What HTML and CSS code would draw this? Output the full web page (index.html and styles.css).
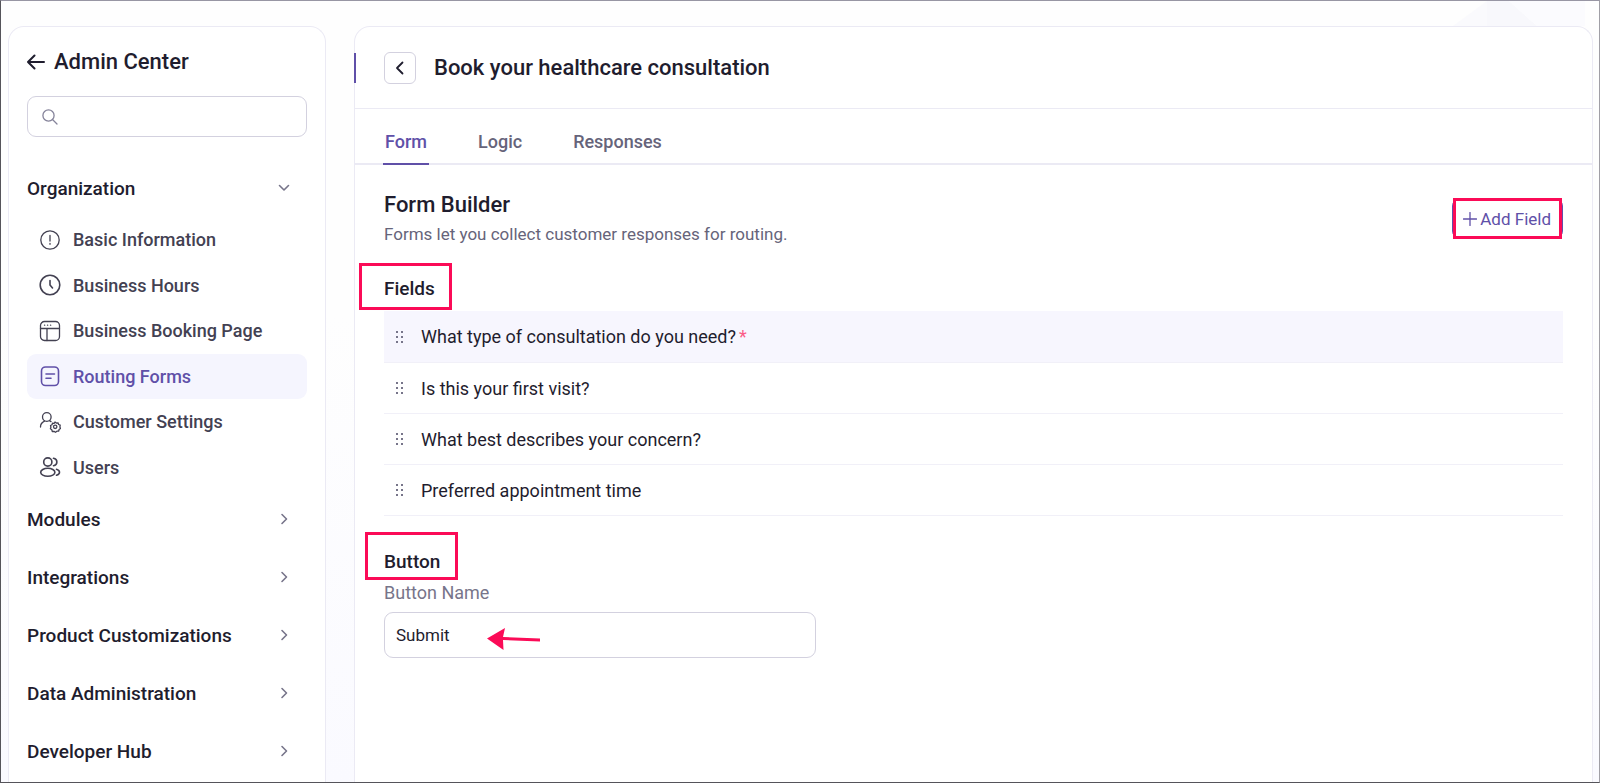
FILE: index.html
```
<!DOCTYPE html>
<html lang="en">
  <head>
    <meta charset="utf-8">
    <title>Admin Center - Routing Forms</title>
    <link rel="stylesheet" href="styles.css">
  </head>
  <body>
    <svg class="backdrop" viewBox="0 0 140 25" aria-hidden="true">
      <path d="M0 25L34 0v25z" fill="#fafafd"/>
      <path d="M34 0h22l28 25H34z" fill="#f8f8fc"/>
      <path d="M56 0h76v25H84z" fill="#fbfbfe"/>
    </svg>
    <aside class="sidebar">
      <a class="sidebar-title" href="#">
        <svg width="18" height="16" viewBox="0 0 18 16"><path d="M17 8H1M7.500 1.500L1 8l6.500 6.500"/></svg>
        Admin Center
      </a>
      <div class="search">
        <svg width="16" height="16" viewBox="0 0 16 16"><circle cx="6.5" cy="6.5" r="5.6"/><path d="M10.5 10.5L15 15"/></svg>
        <input type="search" aria-label="Search">
      </div>
      <nav>
        <button class="group">Organization
          <svg width="12" height="12" viewBox="0 0 12 12"><path d="M1.500 3.500L6 8l4.500-4.500"/></svg>
        </button>
        <div class="items">
          <a href="#">
            <svg width="22" height="22" viewBox="0 0 22 22"><circle cx="11" cy="11" r="9.200"/><path d="M11 6.500v5.500M11 14.300v1"/></svg>
            Basic Information
          </a>
          <a href="#">
            <svg class="bold" width="22" height="22" viewBox="0 0 22 22"><circle cx="11" cy="11" r="9.800"/><path d="M11 6.500v4.500l2.500 3"/></svg>
            Business Hours
          </a>
          <a href="#">
            <svg width="22" height="22" viewBox="0 0 22 22"><rect x="1.500" y="1.500" width="19" height="19" rx="4"/><path d="M1.500 8.500h19M8 8.500v12"/><path d="M5.500 5.200h.2M8.500 5.200h.2M11.500 5.200h.2"/></svg>
            Business Booking Page
          </a>
          <a href="#" class="active">
            <svg class="bold" width="22" height="22" viewBox="0 0 22 22"><rect x="2.500" y="2" width="17" height="18.500" rx="4"/><path d="M7 9h8.500M7 13.200h5"/></svg>
            Routing Forms
          </a>
          <a href="#">
            <svg width="22" height="22" viewBox="0 0 22 22"><circle cx="7.800" cy="6" r="4.300"/><path d="M1.500 16c0-3 1.800-4.800 4-5.800M10.500 9.600l1.500 1"/><path d="M16 11l1.300 1.100 1.700-.3.600 1.700 1.600.7-.3 1.700.6 1.600-1.400 1-.5 1.700-1.700 0-1.400 1.100-1.500-.9-1.700.1-.5-1.700-1.400-1 .5-1.600-.4-1.700 1.500-.8.6-1.600 1.700.2z"/><circle cx="16.200" cy="15.800" r="1.700"/></svg>
            Customer Settings
          </a>
          <a href="#">
            <svg class="bold" width="22" height="22" viewBox="0 0 22 22"><circle cx="8.800" cy="6" r="4.100"/><ellipse cx="8.800" cy="16.300" rx="7.100" ry="4"/><path d="M14.500 2.300c4.500.8 4.500 6.600 0 7.400M17.500 13.200c4 1.200 4 4.800 0 6"/></svg>
            Users
          </a>
        </div>
        <button class="group">Modules
          <svg width="12" height="12" viewBox="0 0 12 12"><path d="M4 1.500L8.500 6 4 10.500"/></svg>
        </button>
        <button class="group">Integrations
          <svg width="12" height="12" viewBox="0 0 12 12"><path d="M4 1.500L8.500 6 4 10.500"/></svg>
        </button>
        <button class="group">Product Customizations
          <svg width="12" height="12" viewBox="0 0 12 12"><path d="M4 1.500L8.500 6 4 10.500"/></svg>
        </button>
        <button class="group">Data Administration
          <svg width="12" height="12" viewBox="0 0 12 12"><path d="M4 1.500L8.500 6 4 10.500"/></svg>
        </button>
        <button class="group">Developer Hub
          <svg width="12" height="12" viewBox="0 0 12 12"><path d="M4 1.500L8.500 6 4 10.500"/></svg>
        </button>
      </nav>
    </aside>

    <main class="panel">
      <header class="panel-header">
        <button class="back" aria-label="Back">
          <svg width="14" height="14" viewBox="0 0 14 14"><path d="M9.500 1.500L4 7l5.500 5.500"/></svg>
        </button>
        <h1>Book your healthcare consultation</h1>
      </header>
      <div class="tabs">
        <a href="#" class="active">Form</a>
        <a href="#">Logic</a>
        <a href="#">Responses</a>
      </div>
      <div class="content">
        <div class="builder-head">
          <div>
            <h2>Form Builder</h2>
            <p>Forms let you collect customer responses for routing.</p>
          </div>
          <button class="add-field">
            <svg width="14" height="14" viewBox="0 0 14 14"><path d="M7 .500v13M.500 7h13"/></svg>
            Add Field
            <span class="mark mark-add"></span>
          </button>
        </div>

        <h3>Fields<span class="mark mark-fields"></span></h3>
        <ul class="fields">
          <li class="selected">
            <svg width="8" height="12" viewBox="0 0 8 12"><path d="M0 0h2v2H0zM5 0h2v2H5zM0 5h2v2H0zM5 5h2v2H5zM0 10h2v2H0zM5 10h2v2H5z"/></svg>
            <span>What type of consultation do you need?</span><span class="required">*</span>
          </li>
          <li>
            <svg width="8" height="12" viewBox="0 0 8 12"><path d="M0 0h2v2H0zM5 0h2v2H5zM0 5h2v2H0zM5 5h2v2H5zM0 10h2v2H0zM5 10h2v2H5z"/></svg>
            <span>Is this your first visit?</span>
          </li>
          <li>
            <svg width="8" height="12" viewBox="0 0 8 12"><path d="M0 0h2v2H0zM5 0h2v2H5zM0 5h2v2H0zM5 5h2v2H5zM0 10h2v2H0zM5 10h2v2H5z"/></svg>
            <span>What best describes your concern?</span>
          </li>
          <li>
            <svg width="8" height="12" viewBox="0 0 8 12"><path d="M0 0h2v2H0zM5 0h2v2H5zM0 5h2v2H0zM5 5h2v2H5zM0 10h2v2H0zM5 10h2v2H5z"/></svg>
            <span>Preferred appointment time</span>
          </li>
        </ul>

        <h3>Button<span class="mark mark-button"></span></h3>
        <label for="button-name">Button Name</label>
        <div class="name-box">
          <input type="text" id="button-name" value="Submit">
          <svg class="arrow" width="54" height="24" viewBox="0 0 54 24"><path d="M0 11.500L18 1l-2 9 37 1.500v3L16 13l.500 10z"/></svg>
        </div>
      </div>
    </main>
  </body>
</html>
```
FILE: styles.css
```
* {
  box-sizing: border-box;
}
body {
  position: relative;
  display: flex;
  gap: 28px;
  min-height: 100vh;
  margin: 0;
  padding: 25px 6px 0 7px;
  border: 1px solid #55545a;
  border-top-color: #9896a4;
  border-right-color: #a09fa6;
  background: linear-gradient(#fefefe 40%, #fafaff);
  color: #1f1d2e;
  font-family: Roboto, "Liberation Sans", sans-serif;
  font-size: 18px;
}
button,
input {
  font: inherit;
  color: inherit;
}
button {
  cursor: pointer;
}
a {
  color: inherit;
  text-decoration: none;
}
h1,
h2,
h3,
p,
ul {
  margin: 0;
  padding: 0;
}
svg {
  flex: none;
  fill: none;
  stroke: currentColor;
  stroke-width: 1.3;
  stroke-linecap: round;
  stroke-linejoin: round;
}
svg.bold {
  stroke-width: 1.6;
}
.backdrop {
  position: absolute;
  top: 0;
  right: 6px;
  width: 140px;
  height: 25px;
  stroke: none;
}

/* sidebar */
.sidebar {
  flex: none;
  width: 318px;
  padding: 0 18px;
  border: 1px solid #ebeaf4;
  border-bottom: none;
  border-radius: 16px 16px 0 0;
  background: #fff;
}
.sidebar-title {
  display: flex;
  align-items: center;
  gap: 9px;
  height: 69px;
  font-size: 22px;
  font-weight: 500;
}
.sidebar-title svg {
  stroke-width: 2;
}
.search {
  display: flex;
  align-items: center;
  height: 41px;
  margin-bottom: 22px;
  padding: 0 14px;
  border: 1px solid #d3d1df;
  border-radius: 9px;
  color: #85839a;
}
.search input {
  flex: 1;
  min-width: 0;
  border: none;
  outline: none;
  background: none;
}
.group {
  display: flex;
  align-items: center;
  justify-content: space-between;
  width: 100%;
  height: 58px;
  padding: 0 17px 0 0;
  border: none;
  background: none;
  font-size: 19px;
  font-weight: 500;
  text-align: left;
}
.group svg {
  color: #77758a;
  stroke-width: 1.6;
}
.items {
  display: grid;
  grid-auto-rows: 1fr;
  height: 273px;
}
.items a {
  display: flex;
  align-items: center;
  gap: 12px;
  padding-left: 12px;
  border-radius: 9px;
  color: #434152;
  font-weight: 500;
}
.items a.active {
  background: #f5f5fe;
  color: #6050a8;
}

/* main panel */
.panel {
  flex: 1;
  min-width: 0;
  border: 1px solid #ebeaf4;
  border-bottom: none;
  border-radius: 16px 16px 0 0;
  background: #fff;
}
.panel-header {
  position: relative;
  display: flex;
  align-items: center;
  gap: 18px;
  height: 82px;
  padding-left: 29px;
  border-bottom: 1px solid #ebeaf4;
}
.panel-header::before {
  content: "";
  position: absolute;
  top: 26px;
  left: -1px;
  width: 2px;
  height: 30px;
  background: #6050a8;
}
.back {
  display: grid;
  place-items: center;
  width: 32px;
  height: 32px;
  padding: 0;
  border: 1px solid #d3d1df;
  border-radius: 6px;
  background: #fff;
}
.back svg {
  stroke-width: 1.8;
}
h1,
h2 {
  font-size: 22px;
  font-weight: 500;
  line-height: 26px;
}
.tabs {
  display: flex;
  gap: 47px;
  height: 56px;
  padding-left: 28px;
  border-bottom: 2px solid #ebeaf4;
  color: #66647a;
  font-weight: 500;
}
.tabs a {
  height: 56px;
  padding: 22px 2px 0;
  line-height: 22px;
}
.tabs a.active {
  border-bottom: 2px solid #6050a8;
  color: #6050a8;
}
.content {
  padding: 27px 29px 0;
}
.builder-head {
  display: flex;
  align-items: flex-start;
  justify-content: space-between;
  margin-bottom: 31px;
}
.builder-head p {
  margin-top: 4px;
  color: #66647a;
  font-size: 17px;
  line-height: 24px;
}
.add-field {
  position: relative;
  display: flex;
  align-items: center;
  gap: 3px;
  height: 41px;
  margin-top: 6px;
  padding: 0 11px 0 10px;
  border: 1px solid #6050a8;
  border-radius: 8px;
  background: #fff;
  color: #6050a8;
  font-size: 17px;
}
h3 {
  position: relative;
  width: max-content;
  font-size: 19px;
  font-weight: 500;
  line-height: 24px;
}
.fields {
  margin: 10px 0 34px;
  list-style: none;
}
.fields li {
  display: flex;
  align-items: center;
  height: 51px;
  padding-left: 12px;
  border-bottom: 1px solid #f1f0f8;
}
.fields li.selected {
  height: 52px;
  background: #f7f6fe;
}
.fields svg {
  margin-right: 17px;
  fill: #77758a;
  stroke: none;
}
.required {
  margin-left: 3px;
  color: #fb5c86;
}
label {
  display: block;
  margin: 8px 0;
  color: #77758a;
  line-height: 22px;
}
.name-box {
  position: relative;
  width: 432px;
  max-width: 100%;
}
.name-box input {
  display: block;
  width: 100%;
  height: 46px;
  padding: 0 11px;
  border: 1px solid #d3d1df;
  border-radius: 9px;
  background: #fff;
  font-size: 17px;
}

/* callouts drawn over the form */
.mark {
  position: absolute;
  border: 3px solid #fb0b57;
}
.mark-add {
  inset: -1px 0;
}
.mark-fields {
  inset: -14px -17px -9px -25px;
}
.mark-button {
  inset: -18px -18px -6px -19px;
}
.arrow {
  position: absolute;
  top: 15px;
  left: 103px;
  fill: #fb0b57;
  stroke: none;
}
```
